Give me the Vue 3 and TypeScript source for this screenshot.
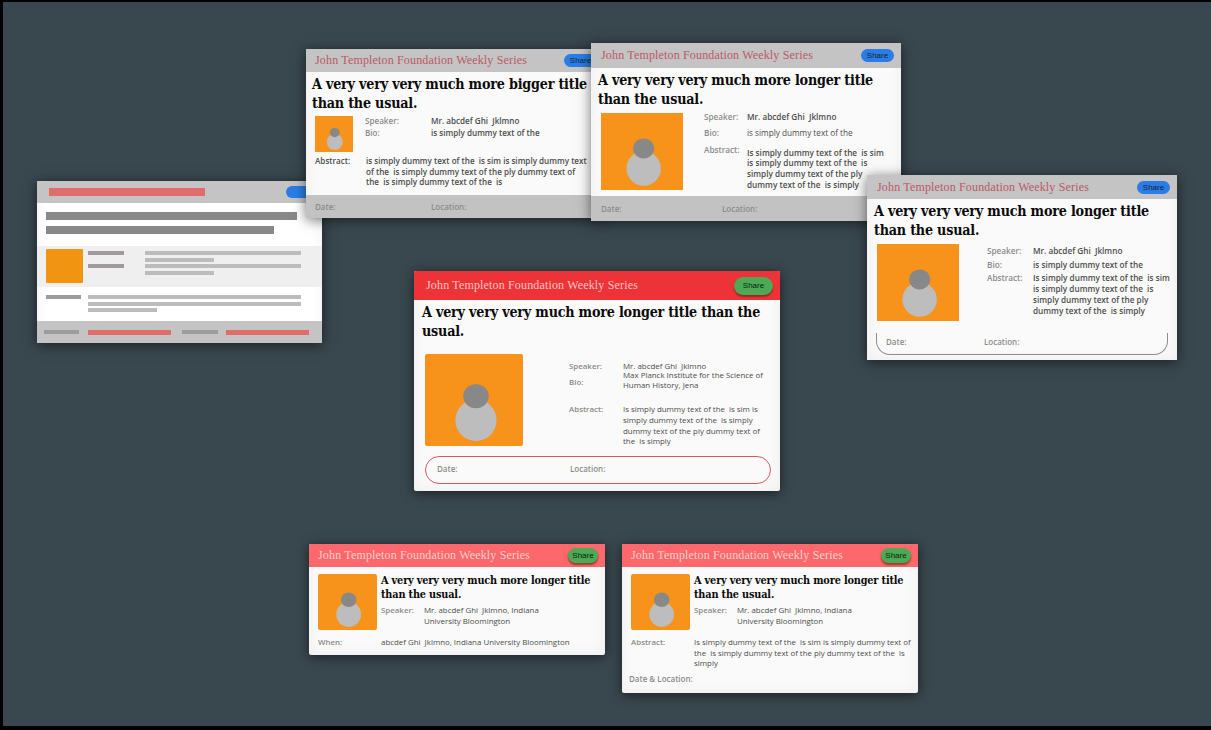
<template>
  <div class="page">
    <svg class="defs" width="0" height="0">
      <symbol id="person" viewBox="0 0 100 100" preserveAspectRatio="none">
        <ellipse cx="52" cy="72" rx="21" ry="22.5" fill="#bdbdbd" />
        <ellipse cx="52" cy="46" rx="13" ry="13" fill="#888888" />
      </symbol>
    </svg>

    <!-- wireframe -->
    <section class="card wire">
      <div class="wire-head">
        <i class="bar red w156 h8"></i>
        <i class="wire-btn"></i>
      </div>
      <div class="wire-title">
        <i class="bar dark w251 h8"></i>
        <i class="bar dark w228 h8"></i>
      </div>
      <div class="wire-band">
        <i class="wire-photo"></i>
        <div class="wire-col">
          <i class="bar mid w36"></i>
          <i class="bar mid w36"></i>
        </div>
        <div class="wire-lines">
          <i class="bar light w156"></i>
          <i class="bar light w69"></i>
          <i class="bar light w156"></i>
          <i class="bar light w69"></i>
        </div>
      </div>
      <div class="wire-abstract">
        <i class="bar mid w35"></i>
        <div class="wire-lines tight">
          <i class="bar light w213"></i>
          <i class="bar light w213"></i>
          <i class="bar light w69"></i>
        </div>
      </div>
      <div class="wire-foot">
        <i class="bar grey w35"></i>
        <i class="bar red w83 h5"></i>
        <i class="bar grey w36 push"></i>
        <i class="bar red w83 h5"></i>
      </div>
    </section>

    <!-- bigger title -->
    <section class="card card-b">
      <header class="head grey-head">
        <span class="series">{{ series }}</span>
        <button class="share blue">Share</button>
      </header>
      <div class="body">
        <h2 class="title">A very very very much more bigger title than the usual.</h2>
        <div class="b-top">
          <svg class="photo"><use href="#person" /></svg>
          <dl class="facts b-facts">
            <dt>Speaker:</dt>
            <dd>{{ speaker }}</dd>
            <dt>Bio:</dt>
            <dd>{{ bio }}</dd>
          </dl>
        </div>
        <div class="b-abstract">
          <strong>Abstract:</strong>
          <p>{{ abstractShort }}</p>
        </div>
      </div>
      <footer class="foot grey-foot b-foot"><span>Date:</span><span>Location:</span></footer>
    </section>

    <!-- longer title, grey footer -->
    <section class="card card-c">
      <header class="head grey-head">
        <span class="series">{{ series }}</span>
        <button class="share blue">Share</button>
      </header>
      <div class="body">
        <h2 class="title">{{ longTitle }}</h2>
        <div class="c-top">
          <svg class="photo"><use href="#person" /></svg>
          <dl class="facts c-facts">
            <dt>Speaker:</dt>
            <dd>{{ speaker }}</dd>
            <dt>Bio:</dt>
            <dd class="thin">{{ bio }}</dd>
            <dt>Abstract:</dt>
            <dd class="abstract">{{ abstractText }}</dd>
          </dl>
        </div>
      </div>
      <footer class="foot grey-foot c-foot"><span>Date:</span><span>Location:</span></footer>
    </section>

    <!-- rounded footer line -->
    <section class="card card-d">
      <header class="head grey-head">
        <span class="series">{{ series }}</span>
        <button class="share blue">Share</button>
      </header>
      <div class="body">
        <h2 class="title">{{ longTitle }}</h2>
        <div class="c-top">
          <svg class="photo"><use href="#person" /></svg>
          <dl class="facts c-facts d-facts">
            <dt>Speaker:</dt>
            <dd>{{ speaker }}</dd>
            <dt>Bio:</dt>
            <dd>{{ bio }}</dd>
            <dt>Abstract:</dt>
            <dd>{{ abstractText }}</dd>
          </dl>
        </div>
      </div>
      <footer class="foot d-foot"><span>Date:</span><span>Location:</span></footer>
    </section>

    <!-- main card -->
    <section class="card card-main">
      <header class="head red-head">
        <span class="series">{{ series }}</span>
        <button class="share green">Share</button>
      </header>
      <div class="body">
        <h2 class="title">{{ longTitle }}</h2>
        <div class="main-top">
          <svg class="photo"><use href="#person" /></svg>
          <dl class="facts main-facts">
            <dt>Speaker:</dt>
            <dd>{{ speaker }}</dd>
            <dt class="bio-label">Bio:</dt>
            <dd class="bio-text">Max Planck Institute for the Science of Human History, Jena</dd>
            <dt>Abstract:</dt>
            <dd>{{ abstractText }}</dd>
          </dl>
        </div>
      </div>
      <footer class="foot main-foot"><span>Date:</span><span>Location:</span></footer>
    </section>

    <!-- small cards -->
    <section class="card card-small card-e">
      <header class="head pink-head">
        <span class="series">{{ series }}</span>
        <button class="share green">Share</button>
      </header>
      <div class="body">
        <div class="small-top">
          <svg class="photo"><use href="#person" /></svg>
          <div>
            <h2 class="title">{{ longTitle }}</h2>
            <dl class="facts small-facts">
              <dt>Speaker:</dt>
              <dd>{{ speakerFull }}</dd>
            </dl>
          </div>
        </div>
        <dl class="facts small-row">
          <dt>When:</dt>
          <dd>abcdef Ghi&nbsp; Jklmno, Indiana University Bloomington</dd>
        </dl>
      </div>
    </section>

    <section class="card card-small card-f">
      <header class="head pink-head">
        <span class="series">{{ series }}</span>
        <button class="share green">Share</button>
      </header>
      <div class="body">
        <div class="small-top">
          <svg class="photo"><use href="#person" /></svg>
          <div>
            <h2 class="title">{{ longTitle }}</h2>
            <dl class="facts small-facts">
              <dt>Speaker:</dt>
              <dd>{{ speakerFull }}</dd>
            </dl>
          </div>
        </div>
        <dl class="facts small-row">
          <dt>Abstract:</dt>
          <dd>{{ abstractText }}</dd>
        </dl>
        <strong class="date-loc">Date &amp; Location:</strong>
      </div>
    </section>
  </div>
</template>

<script setup lang="ts">
const series = 'John Templeton Foundation Weekly Series'
const longTitle = 'A very very very much more longer title than the usual.'
const speaker = 'Mr. abcdef Ghi  Jklmno'
const speakerFull = 'Mr. abcdef Ghi  Jklmno, Indiana University Bloomington'
const bio = 'is simply dummy text of the'
const abstractShort = 'is simply dummy text of the  is sim is simply dummy text of the  is simply dummy text of the ply dummy text of the  is simply dummy text of the  is'
const abstractText = 'Is simply dummy text of the  is sim is simply dummy text of the  is simply dummy text of the ply dummy text of the  is simply'
</script>

<style>
html,
body {
  margin: 0;
  background: #000;
}
</style>

<style scoped>
.page {
  position: absolute;
  left: 3px;
  top: 2px;
  width: 1208px;
  height: 724px;
  overflow: hidden;
  background: #39474e;
  font-family: "Open Sans", "Liberation Sans", sans-serif;
}

.defs {
  position: absolute;
}

.card {
  position: absolute;
  display: flex;
  flex-direction: column;
  background: #fafafa;
  box-shadow: 0 2px 12px rgba(0, 0, 0, 0.55), inset 0 0 14px rgba(0, 0, 0, 0.06);
  overflow: hidden;
}

.head {
  flex: none;
  display: flex;
  align-items: center;
  justify-content: space-between;
}

.grey-head {
  background: #c4c4c4;
  color: #bd5866;
}

.red-head {
  background: #ee3338;
  color: #f9c6c0;
}

.pink-head {
  background: #fc686c;
  color: #fbd0ca;
}

.series {
  font-family: "Liberation Serif", serif;
  font-size: 12px;
  letter-spacing: 0.16px;
  white-space: nowrap;
}

.share {
  flex: none;
  border: 0;
  padding: 0;
  font-family: "Liberation Sans", sans-serif;
  font-size: 8px;
  color: #12233a;
}

.share.blue {
  width: 33px;
  height: 13px;
  border-radius: 7px;
  background: #2a7de6;
}

.share.green {
  color: #0a1f0a;
  background: #4ea956;
  box-shadow: 0 2px 2px rgba(110, 40, 20, 0.7);
}

.body {
  flex: 1;
  min-height: 0;
}

.title {
  margin: 0;
  font-family: "DejaVu Serif Condensed", "DejaVu Serif", serif;
  font-stretch: condensed;
  font-weight: 700;
  font-size: 14.2px;
  line-height: 19px;
  letter-spacing: -0.2px;
  color: #0a0a0a;
}

.photo {
  display: block;
  flex: none;
  background: #f7931a;
}

.facts {
  display: grid;
  margin: 0;
  font-size: 7.9px;
  line-height: 10.7px;
  color: #4c4c4c;
}

.facts dt {
  font-weight: 600;
  color: #8a8a8a;
}

.facts dd {
  margin: 0;
  white-space: pre-wrap;
}

.foot {
  flex: none;
  display: flex;
  align-items: center;
  font-size: 8px;
  font-weight: 600;
  color: #8c8c8c;
}

.grey-foot {
  background: #c2c2c2;
}

/* bigger title card */
.card-b {
  left: 303px;
  top: 47px;
  width: 294px;
  height: 169px;
  z-index: 1;
}

.card-b .head {
  height: 23px;
  padding: 0 3px 0 9px;
}

.card-b .title {
  padding: 3px 0 0 6px;
}

.b-top {
  display: flex;
  margin: 3px 0 0 9px;
}

.b-top .photo {
  width: 38px;
  height: 36px;
}

.b-facts {
  grid-template-columns: 66px 1fr;
  grid-auto-rows: 12px;
  margin-left: 12px;
  font-size: 8.1px;
  font-weight: 600;
}

.b-abstract {
  display: grid;
  grid-template-columns: 51px 224px;
  margin: 4px 0 0 9px;
  font-size: 8.1px;
  line-height: 10.7px;
  font-weight: 600;
  color: #4c4c4c;
}

.b-abstract strong {
  font-weight: 600;
}

.b-abstract p {
  margin: 0;
  white-space: pre-wrap;
}

.b-foot {
  height: 23px;
}

.b-foot span:first-child {
  width: 116px;
  margin-left: 9px;
}

/* longer title cards */
.card-c {
  left: 588px;
  top: 41px;
  width: 310px;
  height: 178px;
  z-index: 2;
}

.card-d {
  left: 864px;
  top: 173px;
  width: 310px;
  height: 185px;
  z-index: 3;
}

.card-c .head {
  height: 25px;
  padding: 0 7px 0 10px;
}

.card-d .head {
  height: 24px;
  padding: 0 7px 0 10px;
}

.card-c .title,
.card-d .title {
  padding: 3px 7px 0;
}

.c-top {
  display: flex;
  margin: 4px 0 0 10px;
}

.c-top .photo {
  width: 82px;
  height: 77px;
}

.c-facts {
  grid-template-columns: 43px 140px;
  margin: -1px 0 0 21px;
  font-size: 8.2px;
  font-weight: 600;
  align-content: start;
}

.c-facts dt,
.c-facts dd {
  margin-bottom: 5.6px;
}

.c-facts .thin {
  font-weight: 400;
}

.c-facts .abstract {
  margin-top: 3px;
}

.c-foot {
  height: 25px;
}

.c-foot span:first-child {
  width: 121px;
  margin-left: 10px;
}

.d-facts {
  grid-template-columns: 46px 140px;
  margin: 2px 0 0 28px;
}

.d-facts dt,
.d-facts dd {
  margin-bottom: 3px;
}

.d-foot {
  height: 22px;
  box-sizing: border-box;
  margin: 0 9px 5px;
  padding-bottom: 4px;
  border: 1px solid #8d8d8d;
  border-top: 0;
  border-radius: 0 0 14px 14px;
}

.d-foot span:first-child {
  width: 98px;
  margin-left: 9px;
}

/* main card */
.card-main {
  left: 411px;
  top: 269px;
  width: 366px;
  height: 220px;
  border-radius: 2px;
  z-index: 4;
}

.card-main .head {
  height: 29px;
  padding: 0 7px 0 12px;
}

.card-main .share {
  width: 39px;
  height: 18px;
  border-radius: 9px;
}

.card-main .title {
  padding: 3px 8px 0;
}

.main-top {
  display: flex;
  margin: 13px 0 0 11px;
}

.main-top .photo {
  width: 98px;
  height: 92px;
  border-radius: 2px;
}

.main-facts {
  grid-template-columns: 54px 142px;
  align-content: start;
  margin: 7px 0 0 46px;
}

.main-facts .bio-label {
  margin-top: 5px;
}

.main-facts .bio-text {
  margin-top: -2px;
  margin-bottom: 13px;
}

.main-foot {
  height: 28px;
  box-sizing: border-box;
  margin: 0 9px 7px 11px;
  padding-bottom: 3px;
  border: 1px solid #d9585c;
  border-radius: 14px;
}

.main-foot span:first-child {
  width: 133px;
  margin-left: 11px;
}

/* small cards */
.card-small {
  width: 296px;
  border-radius: 2px;
}

.card-e {
  left: 306px;
  top: 542px;
  height: 111px;
}

.card-f {
  left: 619px;
  top: 542px;
  height: 149px;
}

.card-small .head {
  height: 23px;
  padding: 0 7px 0 9px;
}

.card-small .share {
  width: 30px;
  height: 15px;
  border-radius: 8px;
}

.card-small .title {
  font-size: 10.8px;
  line-height: 14px;
  letter-spacing: -0.15px;
}

.small-top {
  display: flex;
  gap: 4px;
  margin: 7px 8px 0 9px;
}

.small-top .photo {
  width: 59px;
  height: 56px;
  border-radius: 2px;
}

.small-facts {
  grid-template-columns: 43px 130px;
  margin-top: 3px;
}

.small-row {
  grid-template-columns: 63px 225px;
  margin: 7px 0 0 9px;
}

.date-loc {
  display: block;
  margin: 4px 0 0 7px;
  font-size: 8px;
  font-weight: 600;
  color: #8a8a8a;
}

/* wireframe */
.wire {
  left: 34px;
  top: 179px;
  width: 285px;
  height: 162px;
  background: #fff;
}

.wire i {
  display: block;
}

.wire-head {
  flex: none;
  display: flex;
  align-items: center;
  justify-content: space-between;
  height: 22px;
  padding-left: 12px;
  background: #c4c4c4;
}

.wire-btn {
  width: 36px;
  height: 12px;
  border-radius: 6px;
  background: #2a7de6;
}

.wire-title {
  display: flex;
  flex-direction: column;
  gap: 6px;
  height: 43px;
  padding: 9px 0 0 9px;
  box-sizing: border-box;
}

.wire-band {
  display: flex;
  height: 41px;
  padding: 3px 0 0 9px;
  box-sizing: border-box;
  background: #efefef;
}

.wire-photo {
  width: 37px;
  height: 34px;
  border-radius: 1px;
  background: #f19412;
}

.wire-col {
  display: flex;
  flex-direction: column;
  gap: 9px;
  width: 62px;
  padding: 2px 0 0 5px;
  box-sizing: border-box;
}

.wire-lines {
  display: flex;
  flex-direction: column;
  gap: 2.6px;
  padding-top: 2px;
}

.wire-lines.tight {
  padding-top: 0;
}

.wire-abstract {
  display: flex;
  gap: 7px;
  height: 34px;
  padding: 8px 0 0 9px;
  box-sizing: border-box;
}

.wire-foot {
  flex: none;
  display: flex;
  align-items: center;
  gap: 9px;
  height: 22px;
  margin-top: auto;
  padding-left: 7px;
  background: #c4c4c4;
}

.bar {
  flex: none;
  height: 4px;
}

.bar.push { margin: 0 -1px 0 2px; }
.bar.h8 { height: 8px; }
.bar.h5 { height: 5px; }
.bar.red { background: #e06c6c; }
.bar.dark { background: #888; }
.bar.mid { background: #a09a9c; }
.bar.light { background: #bcbcbc; }
.bar.grey { background: #9c9c9c; }
.w35 { width: 35px; }
.w36 { width: 36px; }
.w69 { width: 69px; }
.w83 { width: 83px; }
.w156 { width: 156px; }
.w213 { width: 213px; }
.w228 { width: 228px; }
.w251 { width: 251px; }
</style>
